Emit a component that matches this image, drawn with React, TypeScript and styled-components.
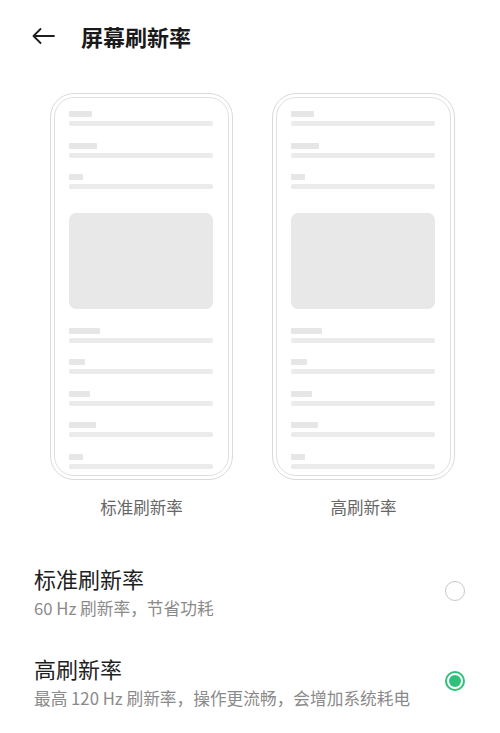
import styled, { createGlobalStyle } from "styled-components";

const GlobalStyle = createGlobalStyle`
  html, body {
    margin: 0;
    padding: 0;
    background: #ffffff;
  }
  body {
    font-family: "Noto Sans CJK SC", "Noto Sans", sans-serif;
    color: #1f1f1f;
  }
`;

const Page = styled.div`
  width: 500px;
  min-height: 733px;
  background: #fff;
`;

const Header = styled.div`
  height: 72px;
  display: flex;
  align-items: center;
  padding-left: 32px;
`;

const BackButton = styled.button`
  border: none;
  background: none;
  padding: 0;
  width: 23px;
  height: 16px;
  display: flex;
  align-items: center;
  cursor: pointer;
`;

const Title = styled.h1`
  margin: 0 0 0 26px;
  font-size: 22px;
  font-weight: 700;
  line-height: 30px;
  color: #1a1a1a;
`;

const PreviewRow = styled.div`
  display: flex;
  gap: 39px;
  padding-left: 50px;
  margin-top: 21px;
`;

const Preview = styled.div`
  display: flex;
  flex-direction: column;
  align-items: center;
`;

const PhoneOuter = styled.div`
  width: 183px;
  height: 387px;
  box-sizing: border-box;
  border: 1.5px solid #dadada;
  border-radius: 24px;
  padding: 3px;
`;

const PhoneInner = styled.div`
  height: 100%;
  box-sizing: border-box;
  border: 1.5px solid #e0e0e0;
  border-radius: 20px;
  padding: 13px 15px 0 14px;
  overflow: hidden;
  display: flex;
  flex-direction: column;
  & > * {
    flex-shrink: 0;
  }
`;

const Group = styled.div`
  display: flex;
  flex-direction: column;
  gap: 4px;
  margin-bottom: 16.5px;
`;

const Label = styled.div<{ $w: number }>`
  width: ${(p) => p.$w}px;
  height: 6px;
  border-radius: 1px;
  background: #e6e6e6;
`;

const Line = styled.div`
  height: 5px;
  border-radius: 2px;
  background: #ebebeb;
`;

const Card = styled.div`
  height: 96px;
  margin: 7px 0 19px;
  border-radius: 7px;
  background: #e8e8e8;
`;

const Caption = styled.div`
  margin-top: 17px;
  font-size: 16.5px;
  line-height: 20px;
  color: #666;
`;

const Options = styled.div`
  margin-top: 29px;
`;

const Option = styled.div`
  display: flex;
  align-items: center;
  padding: 17px 35px 17px 34px;
`;

const OptionText = styled.div`
  flex: 1;
  display: flex;
  flex-direction: column;
  gap: 4px;
`;

const OptionTitle = styled.div`
  font-size: 22px;
  line-height: 30px;
  color: #1f1f1f;
`;

const OptionSub = styled.div`
  font-size: 16.7px;
  line-height: 22px;
  color: #8a8a8a;
`;

const Radio = styled.div<{ $on: boolean }>`
  width: 20px;
  height: 20px;
  box-sizing: border-box;
  border-radius: 50%;
  border: ${(p) => (p.$on ? "2px solid #2fc07a" : "1.5px solid #c8c8c8")};
  display: flex;
  align-items: center;
  justify-content: center;
  &::after {
    content: "";
    display: ${(p) => (p.$on ? "block" : "none")};
    width: 12px;
    height: 12px;
    border-radius: 50%;
    background: #2fc07a;
  }
`;

const topLabels = [23, 28, 14];
const bottomLabels = [31, 16, 21, 27, 14];

const Phone = () => (
  <PhoneOuter>
    <PhoneInner>
      {topLabels.map((w, i) => (
        <Group key={"t" + i}>
          <Label $w={w} />
          <Line />
        </Group>
      ))}
      <Card />
      {bottomLabels.map((w, i) => (
        <Group key={"b" + i}>
          <Label $w={w} />
          <Line />
        </Group>
      ))}
    </PhoneInner>
  </PhoneOuter>
);

const modes = [
  { title: "标准刷新率", sub: "60 Hz 刷新率，节省功耗", on: false },
  { title: "高刷新率", sub: "最高 120 Hz 刷新率，操作更流畅，会增加系统耗电", on: true },
];

export default function App() {
  return (
    <Page>
      <GlobalStyle />
      <Header>
        <BackButton aria-label="back">
          <svg width="23" height="16" viewBox="0 0 23 16" fill="none">
            <path
              d="M22 8H1.5M8.5 1L1.5 8l7 7"
              stroke="#1f1f1f"
              strokeWidth="1.8"
              strokeLinecap="round"
              strokeLinejoin="round"
            />
          </svg>
        </BackButton>
        <Title>屏幕刷新率</Title>
      </Header>

      <PreviewRow>
        <Preview>
          <Phone />
          <Caption>标准刷新率</Caption>
        </Preview>
        <Preview>
          <Phone />
          <Caption>高刷新率</Caption>
        </Preview>
      </PreviewRow>

      <Options>
        {modes.map((m) => (
          <Option key={m.title}>
            <OptionText>
              <OptionTitle>{m.title}</OptionTitle>
              <OptionSub>{m.sub}</OptionSub>
            </OptionText>
            <Radio $on={m.on} />
          </Option>
        ))}
      </Options>
    </Page>
  );
}
